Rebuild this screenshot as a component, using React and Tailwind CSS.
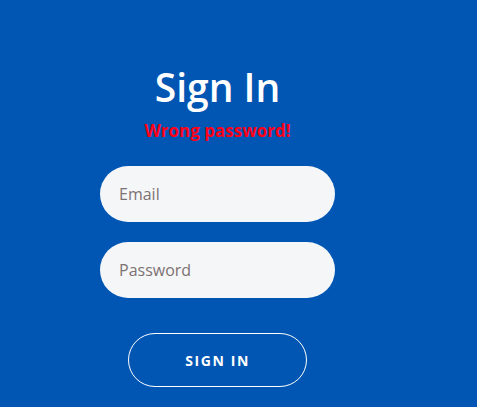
export default function App() {
  return (
    <div className="w-[477px] h-[407px] bg-[#0156b3] overflow-hidden" style={{ fontFamily: '"Open Sans", "Noto Sans", sans-serif' }}>
      <div className="w-[435px] flex flex-col items-center pt-[61px]">
        <h1 className="text-[39px] leading-[52px] font-semibold text-white">Sign In</h1>
        <p className="mt-[6px] text-[17px] leading-[23px] font-bold text-[#ff0019]">Wrong password!</p>
        <input
          className="mt-[24px] w-[235px] h-[56px] rounded-full bg-[#f5f6f8] px-[19px] text-[16px] text-[#333] placeholder:text-[#7d7272] outline-none"
          placeholder="Email"
        />
        <input
          className="mt-[20px] w-[235px] h-[56px] rounded-full bg-[#f5f6f8] px-[19px] text-[16px] text-[#333] placeholder:text-[#7d7272] outline-none"
          placeholder="Password"
          type="password"
        />
        <button className="mt-[35px] w-[179px] h-[54px] rounded-full border border-white text-white text-[14px] font-bold tracking-[1.6px]">
          SIGN IN
        </button>
      </div>
    </div>
  );
}
